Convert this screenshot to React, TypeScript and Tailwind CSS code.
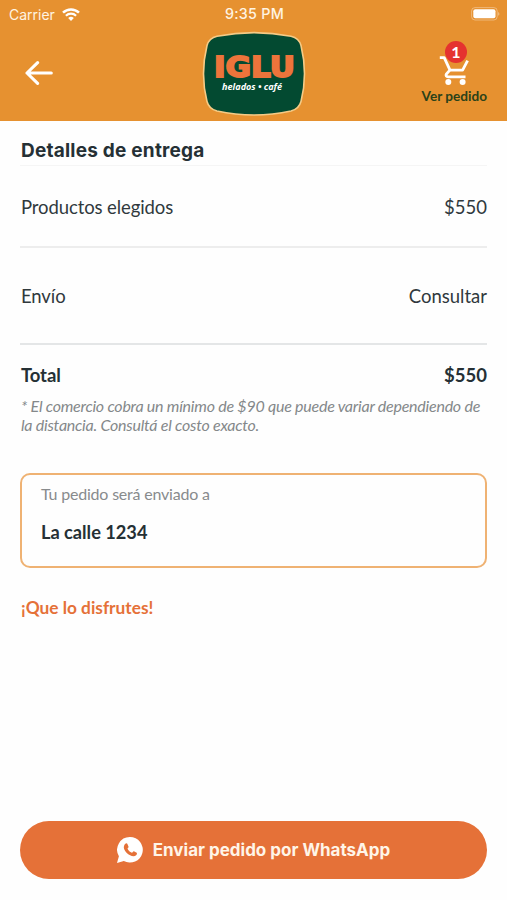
import { ReactNode } from "react";

const WifiIcon = () => (
  <svg width="18" height="13" viewBox="0 0 18 13" fill="none" stroke="#fff">
    <path d="M1 4.6a11.6 11.6 0 0 1 16 0" strokeWidth="2.5" />
    <path d="M3.9 7.7a7.4 7.4 0 0 1 10.2 0" strokeWidth="2.2" />
    <path d="M9 13 6.2 10.1a4.2 4.2 0 0 1 5.6 0Z" fill="#fff" stroke="none" />
  </svg>
);

const BatteryIcon = () => (
  <svg width="29" height="14" viewBox="0 0 29 14">
    <rect x="0.6" y="0.6" width="25.6" height="12.4" rx="3.4" fill="none" stroke="#fff" strokeOpacity="0.35" />
    <rect x="2.3" y="2.3" width="22.2" height="9" rx="2" fill="#fff" />
    <path d="M27.3 5v3.8c1.4-.8 1.4-3 0-3.8Z" fill="#fff" fillOpacity="0.5" />
  </svg>
);

const ArrowIcon = () => (
  <svg width="28" height="24" viewBox="0 0 28 24" fill="none" stroke="#fff" strokeWidth="3.1" strokeLinecap="round" strokeLinejoin="round">
    <path d="M26.3 12H2M12.6 1.7 2 12l10.6 10.3" />
  </svg>
);

const CartIcon = () => (
  <svg width="30" height="30" viewBox="0 0 30 30" fill="none" stroke="#fff" strokeWidth="2.8">
    <path d="M.8 2.6h4.4L11 15.2h12.6L28.6 5.6" strokeLinejoin="round" />
    <path d="M10.6 15.4 7.4 19c-.9 1.7-.1 2.9 1.7 2.9H26.5" />
    <circle cx="9.3" cy="26.9" r="3" fill="#fff" stroke="none" />
    <circle cx="23.6" cy="26.9" r="3" fill="#fff" stroke="none" />
  </svg>
);

const Logo = () => (
  <svg width="104" height="86" viewBox="0 0 104 86">
    <path
      d="M15 5.2Q52-2 89 5.2 97 7 99 14.5Q106 43 99 70.5 97 78 89 80Q52 88 15 80 7 78 5 70.5-2 43 5 14.5 7 7 15 5.2Z"
      fill="#034a31"
      stroke="#f5cb86"
      strokeWidth="1.6"
    />
    <text
      x="12"
      y="46"
      textLength="81"
      lengthAdjust="spacingAndGlyphs"
      fill="#ed743b"
      stroke="#ed743b"
      strokeWidth="1.8"
      className="font-['DejaVu_Sans'] text-[28px] font-bold"
    >
      IGLU
    </text>
    <text
      x="20"
      y="58.5"
      textLength="60"
      lengthAdjust="spacingAndGlyphs"
      fill="#fff"
      className="font-['Open_Sans'] text-[9px] font-bold italic"
    >
      helados • café
    </text>
  </svg>
);

const WhatsAppIcon = () => (
  <svg width="26" height="26" viewBox="0 0 26 26">
    <path d="M13 0a12.8 12.8 0 1 1-6.2 24L0 26l1.9-6.7A12.8 12.8 0 0 1 13 0Z" fill="#fff" />
    <path
      d="M8.7 6.5c.5-.4 1.3-.3 1.6.3l1.2 2.7c.4 1-.9 1.7-1 2.3 1 2 2.4 3.2 4.4 4 .7-.1 1.3-1.7 2-1.5l2.8 1.4c.6.4.1 2-.6 2.6-1.7 1.4-4.2.8-6-.1-2.6-1.3-4.9-3.6-6-6.3-.7-2-.1-4.2 1.6-5.4Z"
      fill="#e57138"
    />
  </svg>
);

interface RowProps {
  label: string;
  children: ReactNode;
  className?: string;
}

const Row = ({ label, children, className = "" }: RowProps) => (
  <div className={`flex items-center justify-between pl-px text-[18.5px] ${className}`}>
    <span className="tracking-[-0.1px]">{label}</span>
    <span>{children}</span>
  </div>
);

function App() {
  return (
    <div className="flex h-[900px] w-[507px] flex-col overflow-hidden bg-[#fefefe] font-['Lato',sans-serif] text-[#30393d]">
      <header className="h-[121px] shrink-0 bg-[#e69130]">
        <div className="grid h-[28px] grid-cols-[1fr_auto_1fr] items-center pr-[7px] pl-[9px] font-['Inter',sans-serif] text-[#fff4e2]">
          <div className="flex items-center gap-[7px]">
            <span className="text-[14px]">Carrier</span>
            <WifiIcon />
          </div>
          <span className="text-center text-[14.3px] font-medium tracking-[0.25px]">9:35 PM</span>
          <div className="flex justify-end">
            <BatteryIcon />
          </div>
        </div>
        <div className="grid h-[92px] grid-cols-3">
          <button className="mt-[33px] ml-[25px] h-6 w-7" aria-label="Volver">
            <ArrowIcon />
          </button>
          <div className="mt-[3px] flex justify-center">
            <Logo />
          </div>
          <div className="flex flex-col items-end pt-[27px] pr-5">
            <div className="relative mr-[18px]">
              <CartIcon />
              <span className="absolute -top-[14px] left-[6px] flex size-[22px] items-center justify-center rounded-full bg-[#e5322f] text-[16px] font-bold text-white">
                1
              </span>
            </div>
            <span className="mt-[2px] text-[13.6px] leading-[18px] font-bold text-[#2b4219]">Ver pedido</span>
          </div>
        </div>
      </header>
      <main className="flex flex-1 flex-col px-5">
        <h1 className="h-[45px] border-b border-[#f5f5f5] pt-[17px] pl-px font-['Inter',sans-serif] text-[19px] leading-[26px] font-bold tracking-[0.22px] text-[#253035]">
          Detalles de entrega
        </h1>
        <Row label="Productos elegidos" className="h-[82px] border-b-2 border-[#ededed] pt-1">
          $550
        </Row>
        <Row label="Envío" className="h-[97px] border-b-2 border-[#e4e6e7] pt-[3px]">
          Consultar
        </Row>
        <Row label="Total" className="mt-[17px] h-[28px] font-bold text-[#253035]">
          $550
        </Row>
        <p className="mt-[6px] pl-px text-[16px] leading-[19px] tracking-[-0.24px] whitespace-nowrap text-[#84888a] italic">
          * El comercio cobra un mínimo de $90 que puede variar dependiendo de
          <br />
          la distancia. Consultá el costo exacto.
        </p>
        <div className="mt-[39px] h-[95px] rounded-[10px] border-2 border-[#efb273] px-[19px] pt-[8px]">
          <div className="text-[16px] leading-[22px] tracking-[-0.2px] text-[#888b8d]">Tu pedido será enviado a</div>
          <div className="mt-[15px] text-[18.2px] leading-6 font-bold text-[#253035]">La calle 1234</div>
        </div>
        <p className="mt-[28px] pl-px text-[17.3px] leading-6 font-bold text-[#e57138]">¡Que lo disfrutes!</p>
        <button className="mt-auto mb-[21px] flex h-[58px] shrink-0 items-center justify-center gap-[10px] rounded-full bg-[#e57138] font-['Inter',sans-serif] text-[17px] font-bold text-[#fff5e8]">
          <WhatsAppIcon />
          <span className="pt-[2px]">Enviar pedido por WhatsApp</span>
        </button>
      </main>
    </div>
  );
}

export default App;
